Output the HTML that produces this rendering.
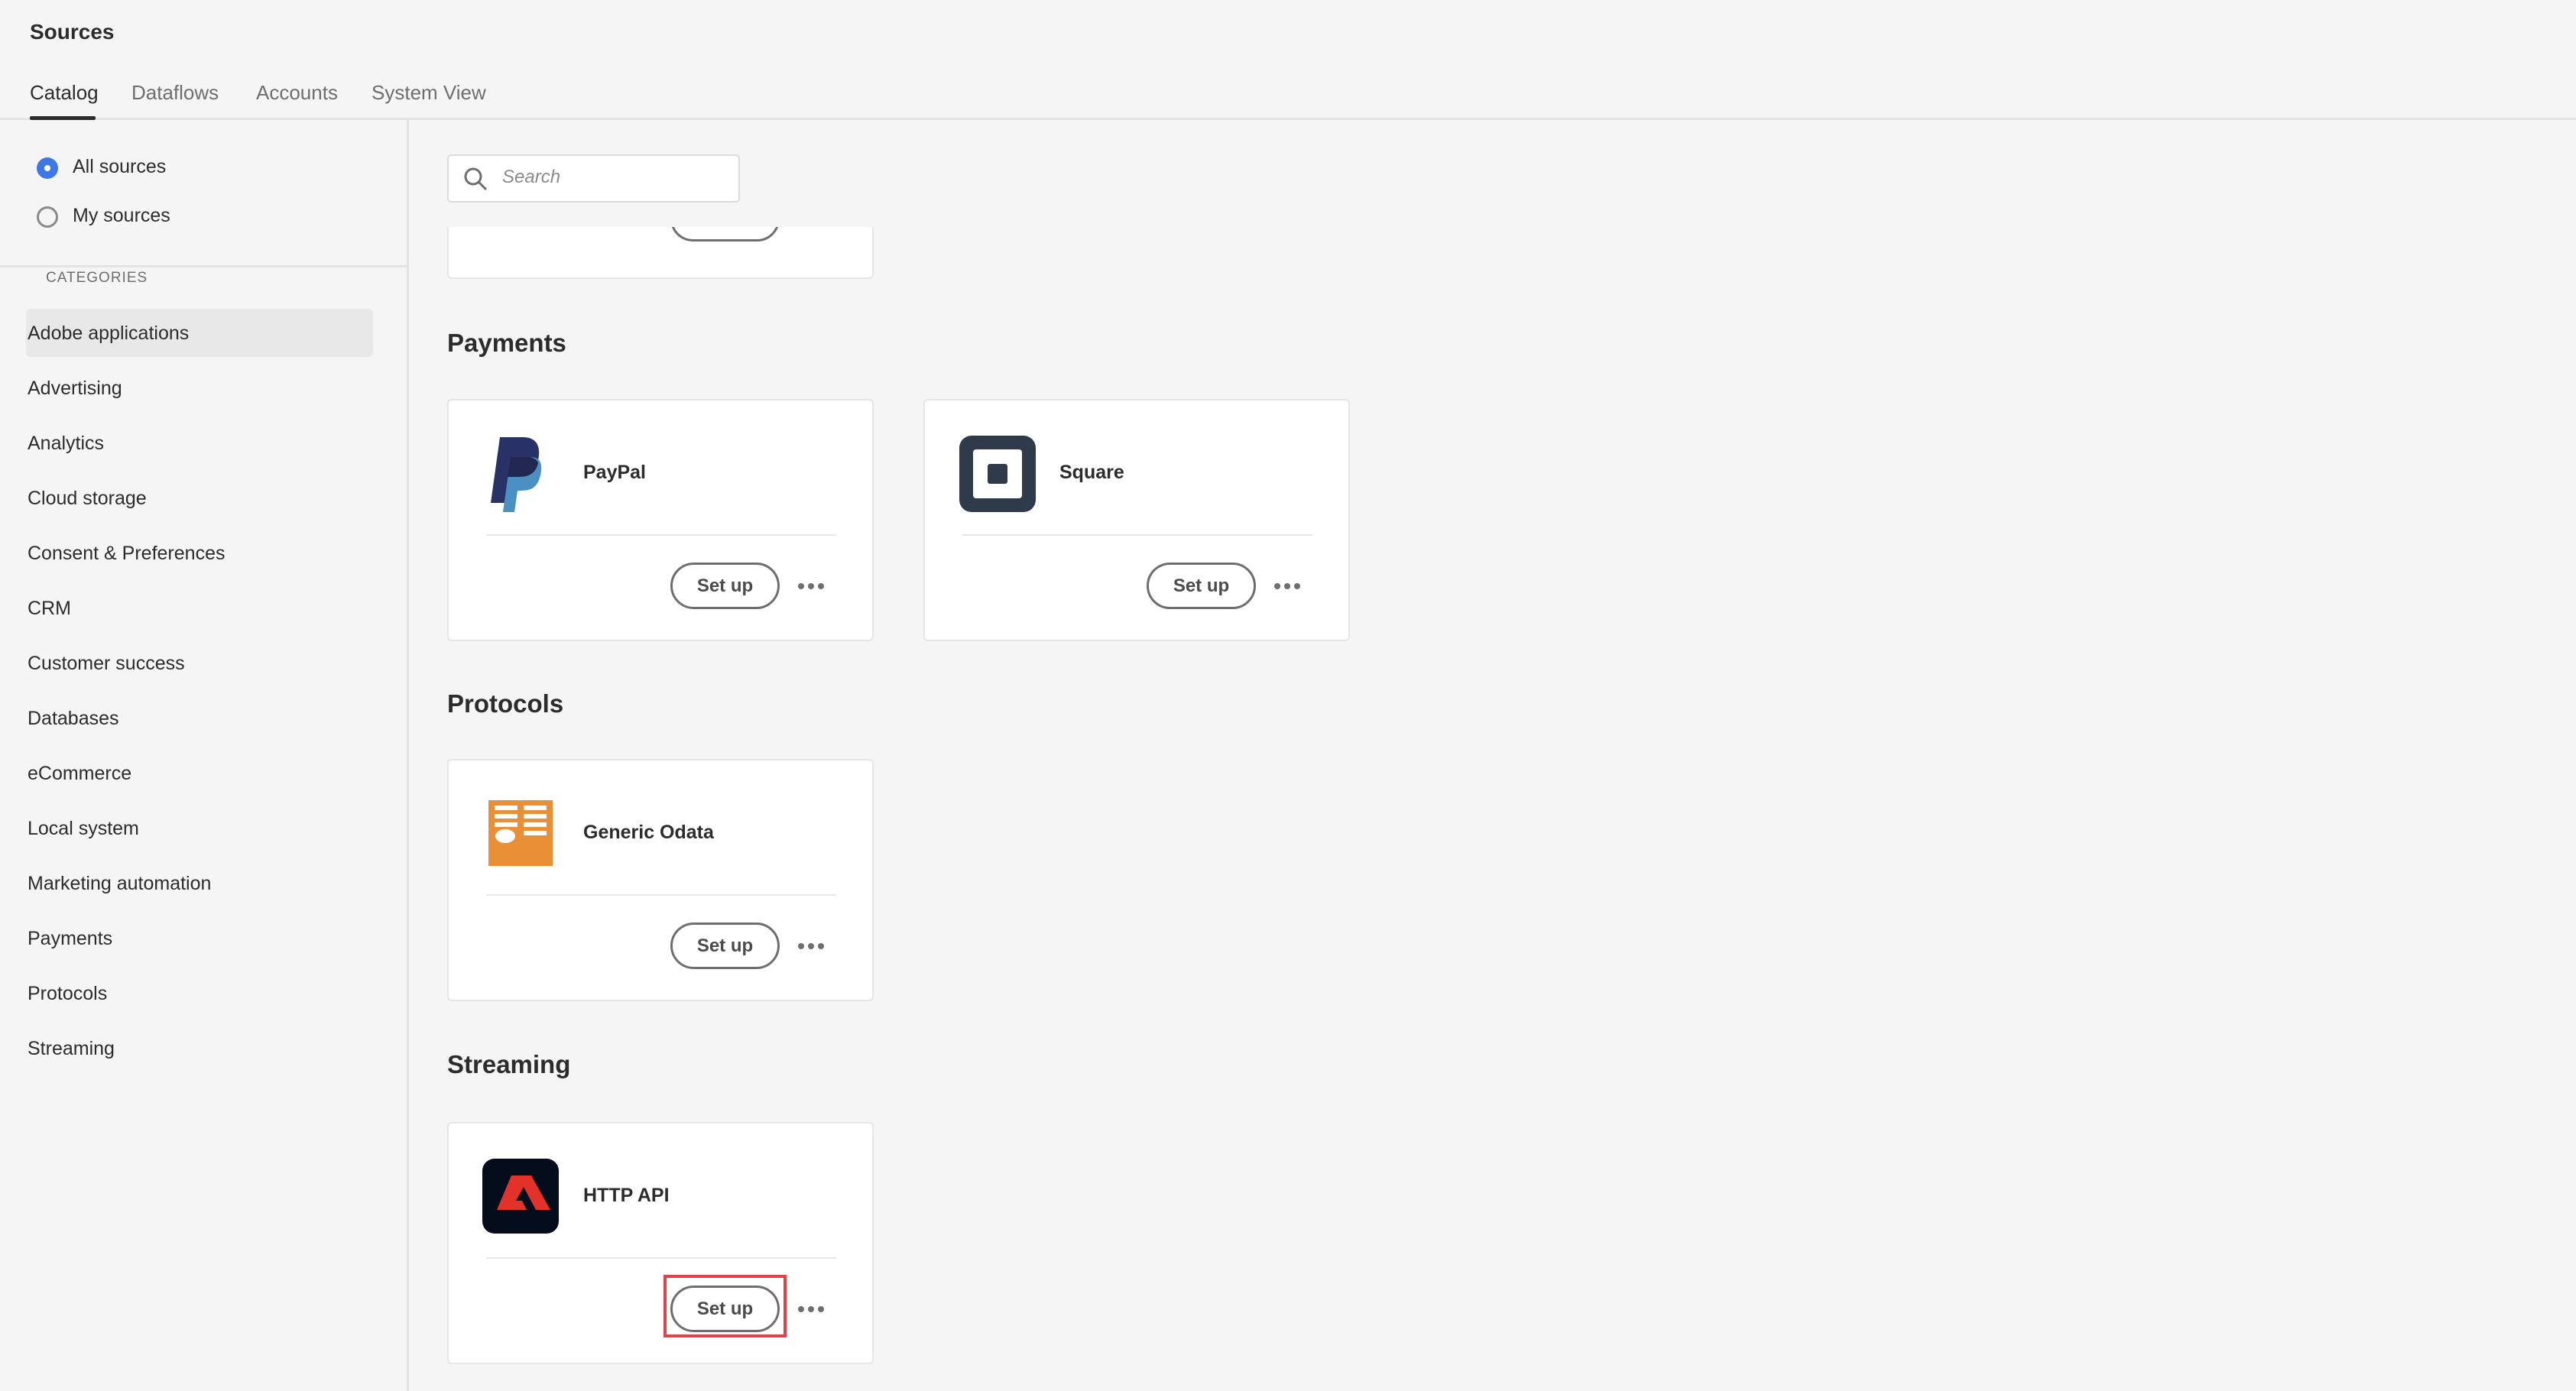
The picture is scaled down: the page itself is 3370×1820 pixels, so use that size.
<!DOCTYPE html>
<html><head><meta charset="utf-8"><style>
*{box-sizing:border-box;margin:0;padding:0}
body{width:3370px;height:1820px;background:#f5f5f5;font-family:"Liberation Sans",sans-serif;color:#2c2c2c;position:relative;overflow:hidden}
.a{position:absolute;white-space:nowrap}
.tab{font-size:26px;color:#6e6e6e;top:106px}
.cat{position:absolute;left:36px;font-size:25px;color:#2c2c2c;line-height:30px}
.card{position:absolute;background:#fff;border:2px solid #e6e6e6;border-radius:6px;width:558px;height:317px}
.card .ic{position:absolute;left:45px;top:46px;width:100px;height:100px}
.card .nm{position:absolute;left:176px;top:80px;font-size:25px;font-weight:bold;color:#2c2c2c}
.card .hr{position:absolute;left:49px;right:47px;top:175px;height:2px;background:#e8e8e8}
.card .btn{position:absolute;left:290px;top:212px;width:143px;height:61px;border:3px solid #6e6e6e;border-radius:31px;font-size:24px;font-weight:bold;color:#4b4b4b;text-align:center;line-height:55px}
.card .dots{position:absolute;left:456px;top:238px;width:36px;height:10px}
.h2{position:absolute;left:585px;font-size:33px;font-weight:bold;color:#2c2c2c}
</style></head><body>
<div class="a" style="left:39px;top:26px;font-size:28px;font-weight:bold;color:#2c2c2c">Sources</div>
<div class="a tab" style="left:39px;color:#2c2c2c">Catalog</div>
<div class="a tab" style="left:172px">Dataflows</div>
<div class="a tab" style="left:335px">Accounts</div>
<div class="a tab" style="left:486px">System View</div>
<div class="a" style="left:0;top:154px;width:3370px;height:3px;background:#e3e3e3"></div>
<div class="a" style="left:39px;top:152px;width:86px;height:5px;background:#2c2c2c;border-radius:2px"></div>
<div class="a" style="left:532px;top:157px;width:3px;height:1663px;background:#e3e3e3"></div>
<div class="a" style="left:48px;top:206px;width:28px;height:28px;border-radius:50%;background:#3e78e6"></div>
<div class="a" style="left:58px;top:216px;width:8px;height:8px;border-radius:50%;background:#fff"></div>
<div class="a" style="left:95px;top:204px;font-size:25px">All sources</div>
<div class="a" style="left:48px;top:270px;width:28px;height:28px;border-radius:50%;border:3px solid #8a8a8a"></div>
<div class="a" style="left:95px;top:268px;font-size:25px">My sources</div>
<div class="a" style="left:0;top:347px;width:533px;height:3px;background:#e3e3e3"></div>
<div class="a" style="left:60px;top:353px;font-size:19px;color:#6e6e6e;letter-spacing:1px">CATEGORIES</div>
<div class="a" style="left:34px;top:404px;width:454px;height:63px;background:#e8e8e8;border-radius:6px"></div>
<div class="cat" style="top:421px">Adobe applications</div>
<div class="cat" style="top:493px">Advertising</div>
<div class="cat" style="top:565px">Analytics</div>
<div class="cat" style="top:637px">Cloud storage</div>
<div class="cat" style="top:709px">Consent &amp; Preferences</div>
<div class="cat" style="top:781px">CRM</div>
<div class="cat" style="top:853px">Customer success</div>
<div class="cat" style="top:925px">Databases</div>
<div class="cat" style="top:997px">eCommerce</div>
<div class="cat" style="top:1069px">Local system</div>
<div class="cat" style="top:1141px">Marketing automation</div>
<div class="cat" style="top:1213px">Payments</div>
<div class="cat" style="top:1285px">Protocols</div>
<div class="cat" style="top:1357px">Streaming</div>
<div class="a" style="left:585px;top:202px;width:383px;height:63px;background:#fff;border:2px solid #dcdcdc;border-radius:5px"></div>
<svg class="a" style="left:605px;top:217px" width="34" height="34" viewBox="0 0 34 34"><circle cx="14" cy="14" r="10" fill="none" stroke="#6e6e6e" stroke-width="3"/><line x1="21" y1="21" x2="31" y2="31" stroke="#6e6e6e" stroke-width="3"/></svg>
<div class="a" style="left:657px;top:218px;font-size:24px;font-style:italic;color:#8a8a8a">Search</div>
<div class="a" style="left:585px;top:297px;width:558px;height:68px;background:#fff;border:2px solid #e6e6e6;border-top:none;border-radius:0 0 6px 6px;overflow:hidden">
<div style="position:absolute;left:290px;top:-40px;width:143px;height:59px;border:3px solid #6e6e6e;border-radius:30px"></div></div>
<div class="h2" style="top:430px">Payments</div>
<div class="card" style="left:585px;top:522px">
<svg class="ic" viewBox="0 0 100 100"><path d="M22 2h30c18 0 24 12 20 30-4 16-14 22-30 22h-6l-6 34H10z" fill="#283266"/><path d="M36 28h26c14 0 16 10 13 24-4 16-12 20-26 20h-4l-4 28H26z" fill="#4a90c2"/><path d="M36 28h26c6 2 9 4 10 8-3 12-10 18-26 18h-14z" fill="#212750"/></svg>
<div class="nm">PayPal</div><div class="hr"></div><div class="btn">Set up</div>
<svg class="dots" viewBox="0 0 36 10"><circle cx="5" cy="5" r="4" fill="#6e6e6e"/><circle cx="18" cy="5" r="4" fill="#6e6e6e"/><circle cx="31" cy="5" r="4" fill="#6e6e6e"/></svg></div>
<div class="card" style="left:1208px;top:522px">
<svg class="ic" viewBox="0 0 100 100"><rect x="0" y="0" width="100" height="100" rx="16" fill="#2f3a4a"/><rect x="18" y="18" width="64" height="64" rx="4" fill="#fff"/><rect x="37" y="37" width="26" height="26" rx="3" fill="#2f3a4a"/></svg>
<div class="nm">Square</div><div class="hr"></div><div class="btn">Set up</div>
<svg class="dots" viewBox="0 0 36 10"><circle cx="5" cy="5" r="4" fill="#6e6e6e"/><circle cx="18" cy="5" r="4" fill="#6e6e6e"/><circle cx="31" cy="5" r="4" fill="#6e6e6e"/></svg></div>
<div class="h2" style="top:902px">Protocols</div>
<div class="card" style="left:585px;top:993px">
<svg class="ic" viewBox="0 0 84 86" style="top:52px;height:86px;left:52px;width:84px"><rect width="84" height="86" fill="#e98f35"/><g fill="#fff"><rect x="8" y="7" width="30" height="6"/><rect x="46" y="7" width="30" height="6"/><rect x="8" y="18" width="30" height="6"/><rect x="46" y="18" width="30" height="6"/><rect x="8" y="29" width="30" height="6"/><rect x="46" y="29" width="30" height="6"/><rect x="46" y="40" width="30" height="6"/><ellipse cx="22" cy="47" rx="13" ry="9"/></g></svg>
<div class="nm">Generic Odata</div><div class="hr"></div><div class="btn">Set up</div>
<svg class="dots" viewBox="0 0 36 10"><circle cx="5" cy="5" r="4" fill="#6e6e6e"/><circle cx="18" cy="5" r="4" fill="#6e6e6e"/><circle cx="31" cy="5" r="4" fill="#6e6e6e"/></svg></div>
<div class="h2" style="top:1374px">Streaming</div>
<div class="card" style="left:585px;top:1468px">
<svg class="ic" viewBox="0 0 100 100" style="top:46px;left:44px"><rect width="100" height="98" rx="16" fill="#050d1d"/><path d="M38 22h26l25 45H70l-16-30-10 18h8l6 12H19z" fill="#e3322a"/></svg>
<div class="nm">HTTP API</div><div class="hr"></div><div class="btn">Set up</div>
<svg class="dots" viewBox="0 0 36 10"><circle cx="5" cy="5" r="4" fill="#6e6e6e"/><circle cx="18" cy="5" r="4" fill="#6e6e6e"/><circle cx="31" cy="5" r="4" fill="#6e6e6e"/></svg></div>
<div class="a" style="left:868px;top:1668px;width:161px;height:82px;border:4px solid #e0414a"></div>
</body></html>
